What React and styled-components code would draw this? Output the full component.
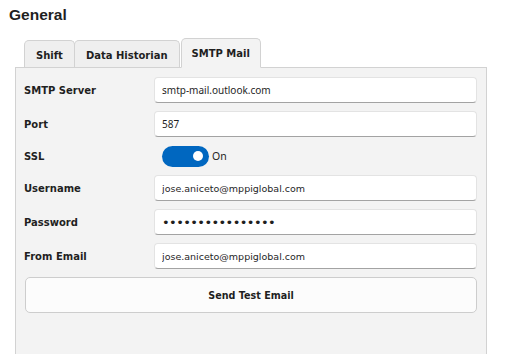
import React from 'react';
import styled, { createGlobalStyle } from 'styled-components';

const GlobalStyle = createGlobalStyle`
    html, body {
        margin: 0;
        padding: 0;
        background: #ffffff;
    }
    body {
        font-family: "DejaVu Sans", sans-serif;
        color: #222;
    }
`;

const textColor = '#1f1f1f';
const panelBorder = '#d2d2d2';
const panelBg = '#f3f3f3';

const Page = styled.div`
    width: 505px;
    height: 354px;
    overflow: hidden;
    padding: 5px 18px 0 15px;
    box-sizing: border-box;
    display: flex;
    flex-direction: column;
`;

const Title = styled.h2`
    margin: 0 0 0 -6px;
    font-family: "Liberation Sans", Arial, sans-serif;
    font-size: 15.5px;
    font-weight: bold;
    color: ${textColor};
    line-height: 20px;
`;

const TabBar = styled.div`
    display: flex;
    align-items: flex-end;
    margin-top: 13px;
    padding-left: 9px;
    height: 29px;
    position: relative;
    z-index: 1;
`;

const Tab = styled.div`
    height: ${({ active }) => (active ? 30 : 27)}px;
    margin-bottom: ${({ active }) => (active ? -1 : 0)}px;
    margin-left: ${({ first, active }) => (first ? 0 : active ? 1 : -1)}px;
    padding: 0 ${({ active }) => (active ? 10 : 11)}px;
    padding-top: ${({ active }) => (active ? 0 : 2)}px;
    box-sizing: border-box;
    display: flex;
    align-items: center;
    justify-content: center;
    border: 1px solid ${panelBorder};
    border-bottom: ${({ active }) => (active ? `1px solid ${panelBg}` : 'none')};
    border-radius: 5px 5px 0 0;
    background: ${({ active }) => (active ? panelBg : '#efefef')};
    font-size: 10px;
    font-weight: bold;
    color: ${textColor};
`;

const Panel = styled.div`
    flex: 1;
    background: ${panelBg};
    border: 1px solid ${panelBorder};
    border-bottom: none;
    padding: 9px 9px 0 8px;
`;

const Form = styled.div`
    display: grid;
    grid-template-columns: 130px 1fr;
    grid-template-rows: 26px 26px 22px 26px 26px 26px;
    row-gap: 8px;
    align-items: center;
`;

const Label = styled.div`
    font-size: 10px;
    font-weight: bold;
    color: ${textColor};
`;

const Input = styled.input`
    height: 26px;
    box-sizing: border-box;
    width: 100%;
    margin: 0;
    padding: 0 7px;
    background: #ffffff;
    border: 1px solid #e3e3e3;
    border-bottom-color: #a3a3a3;
    border-radius: 4px;
    outline: none;
    color: ${textColor};
    font-family: ${({ segoe }) => (segoe ? '"Noto Sans", sans-serif' : '"DejaVu Sans", sans-serif')};
    font-size: ${({ segoe, secret }) => (secret ? 13 : segoe ? 10 : 9.5)}px;
    letter-spacing: ${({ secret }) => (secret ? '-0.6px' : 'normal')};
`;

const SwitchRow = styled.div`
    display: flex;
    align-items: center;
    gap: 3px;
    padding-left: 8px;
`;

const Track = styled.div`
    width: 47px;
    height: 21px;
    box-sizing: border-box;
    border-radius: 11px;
    background: ${({ on }) => (on ? '#0067c0' : '#ffffff')};
    display: flex;
    align-items: center;
    justify-content: ${({ on }) => (on ? 'flex-end' : 'flex-start')};
    padding: 0 6px;
`;

const Knob = styled.div`
    width: 10px;
    height: 10px;
    border-radius: 50%;
    background: #ffffff;
`;

const SwitchText = styled.span`
    font-family: "Noto Sans", sans-serif;
    font-size: 10.5px;
    color: ${textColor};
`;

const SendButton = styled.button`
    display: block;
    height: 36px;
    margin: 8px 0 0 1px;
    width: calc(100% - 1px);
    background: #fcfcfc;
    border: 1px solid #cdcdcd;
    border-radius: 5px;
    font-family: "DejaVu Sans", sans-serif;
    font-size: 9.6px;
    font-weight: bold;
    color: ${textColor};
`;

const Field = ({ label, value, segoe, secret }) => (
    <>
        <Label>{label}</Label>
        <Input
            readOnly
            type={secret ? 'password' : 'text'}
            defaultValue={value}
            segoe={segoe}
            secret={secret}
        />
    </>
);

const Toggle = ({ label, on }) => (
    <>
        <Label>{label}</Label>
        <SwitchRow>
            <Track on={on}><Knob /></Track>
            <SwitchText>{on ? 'On' : 'Off'}</SwitchText>
        </SwitchRow>
    </>
);

const tabs = ['Shift', 'Data Historian', 'SMTP Mail'];

export default function App() {
    const activeTab = 'SMTP Mail';

    return (
        <Page>
            <GlobalStyle />
            <Title>General</Title>
            <TabBar>
                {tabs.map((t, i) => (
                    <Tab key={t} first={i === 0} active={t === activeTab}>{t}</Tab>
                ))}
            </TabBar>
            <Panel>
                <Form>
                    <Field label="SMTP Server" value="smtp-mail.outlook.com" segoe />
                    <Field label="Port" value="587" segoe />
                    <Toggle label="SSL" on />
                    <Field label="Username" value="jose.aniceto@mppiglobal.com" />
                    <Field label="Password" value="xxxxxxxxxxxxxxxx" secret />
                    <Field label="From Email" value="jose.aniceto@mppiglobal.com" />
                </Form>
                <SendButton>Send Test Email</SendButton>
            </Panel>
        </Page>
    );
}
